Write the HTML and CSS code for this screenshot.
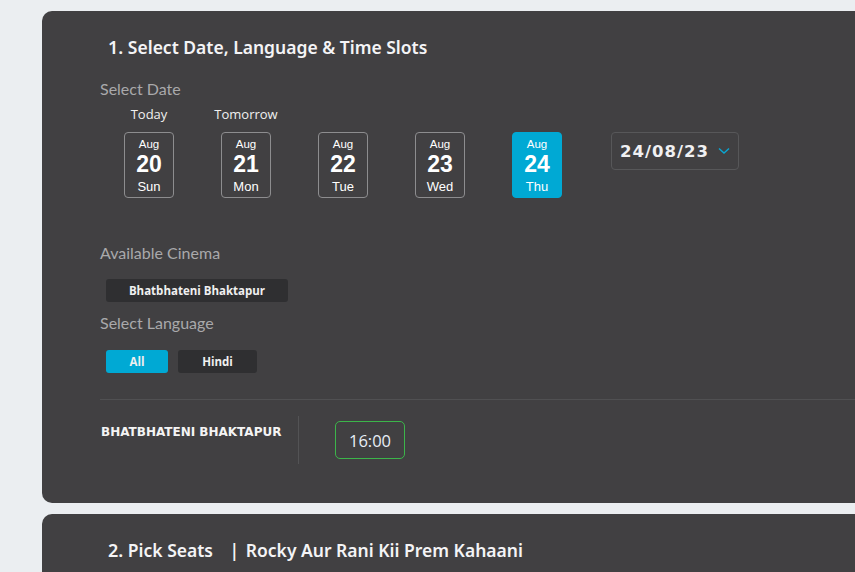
FILE: index.html
```html
<!DOCTYPE html>
<html>
<head>
<meta charset="utf-8">
<link rel="stylesheet" href="styles.css">
</head>
<body>
<main class="page">
  <section class="card card-one">
    <h2 class="step-title"><span class="num">1.</span> Select Date, Language &amp; Time Slots</h2>
    <div class="section-label">Select Date</div>
    <div class="date-row">
      <div class="date-col">
        <div class="date-cap">Today</div>
        <div class="date-box"><span class="m">Aug</span><span class="d">20</span><span class="w">Sun</span></div>
      </div>
      <div class="date-col">
        <div class="date-cap">Tomorrow</div>
        <div class="date-box"><span class="m">Aug</span><span class="d">21</span><span class="w">Mon</span></div>
      </div>
      <div class="date-col">
        <div class="date-cap"></div>
        <div class="date-box"><span class="m">Aug</span><span class="d">22</span><span class="w">Tue</span></div>
      </div>
      <div class="date-col">
        <div class="date-cap"></div>
        <div class="date-box"><span class="m">Aug</span><span class="d">23</span><span class="w">Wed</span></div>
      </div>
      <div class="date-col">
        <div class="date-cap"></div>
        <div class="date-box active"><span class="m">Aug</span><span class="d">24</span><span class="w">Thu</span></div>
      </div>
      <div class="date-col">
        <div class="date-cap"></div>
        <div class="date-picker">24/08/23
          <svg class="chev" width="12" height="8" viewBox="0 0 12 8"><path d="M1 1.5 L6 6 L11 1.5" fill="none" stroke="#0aa6d2" stroke-width="1.4"/></svg>
        </div>
      </div>
    </div>

    <div class="section-label cinema-label">Available Cinema</div>
    <div class="chip-row cinema-chips">
      <span class="chip">Bhatbhateni Bhaktapur</span>
    </div>
    <div class="section-label lang-label">Select Language</div>
    <div class="chip-row lang-chips">
      <span class="chip chip-lang active">All</span>
      <span class="chip chip-lang hindi">Hindi</span>
    </div>

    <div class="show-row">
      <div class="cinema-name">BHATBHATENI BHAKTAPUR</div>
      <div class="times">
        <span class="time">16:00</span>
      </div>
    </div>
  </section>

  <section class="card card-two">
    <h2 class="step-title"><span class="num">2.</span> Pick Seats <span class="bar">|</span> Rocky Aur Rani Kii Prem Kahaani</h2>
  </section>
</main>
</body>
</html>
```

FILE: styles.css
```css
* { box-sizing: border-box; }
html, body { margin: 0; padding: 0; }
body {
  background: #ebeef1;
  font-family: "Open Sans", "Noto Sans", sans-serif;
  color: #fff;
  overflow: hidden;
  width: 855px;
  height: 572px;
}
.page {
  padding: 11px 0 0 42px;
  display: flex;
  flex-direction: column;
  gap: 11px;
}
.card {
  background: #414042;
  border-radius: 10px 0 0 10px;
  width: 813px;
}
.card-one {
  height: 492px;
  padding: 24px 0 0 58px;
}
.card-two {
  height: 80px;
  padding: 24px 0 0 66px;
}
.step-title {
  margin: 0 0 0 8px;
  font-family: "Noto Sans", sans-serif;
  font-size: 17.5px;
  font-weight: 600;
  line-height: 24px;
  color: #f4f4f6;
}
.card-two .step-title { margin-left: 0; }
.step-title .num { font-size: 18px; }
.step-title .bar { margin-left: 12px; margin-right: 2px; }
.section-label {
  font-family: "Lato", sans-serif;
  font-size: 16px;
  color: #a9a9ab;
  line-height: 20px;
  margin-top: 20px;
}
.date-row {
  display: flex;
  gap: 47px;
  margin-top: 6px;
  padding-left: 24px;
}
.date-col {
  display: flex;
  flex-direction: column;
  align-items: center;
  width: 50px;
}
.date-cap {
  height: 18px;
  font-size: 13px;
  line-height: 18px;
  white-space: nowrap;
  color: #f0f0f0;
  margin-bottom: 9px;
}
.date-box {
  width: 50px;
  height: 66px;
  border: 1px solid #8d8d8f;
  border-radius: 4px;
  display: flex;
  flex-direction: column;
  align-items: center;
  padding-top: 5px;
  font-family: "Liberation Sans", Arial, sans-serif;
}
.date-box.active {
  background: #00a9d4;
  border-color: #00a9d4;
}
.date-box .m { font-size: 11.5px; line-height: 12px; }
.date-box .d { font-size: 23px; font-weight: 700; line-height: 29px; }
.date-box .w { font-size: 13px; line-height: 15px; }
.date-col:last-child { width: auto; align-items: flex-start; margin-left: 2px; }
.date-picker {
  width: 128px;
  height: 38px;
  border: 1px solid #575759;
  border-radius: 4px;
  display: flex;
  align-items: center;
  padding-left: 8px;
  font-family: "DejaVu Sans", sans-serif;
  font-weight: 700;
  font-size: 16.5px;
  letter-spacing: 1px;
  color: #f0f0f2;
}
.chev { margin-left: 9px; }
.cinema-label { margin-top: 45px; }
.lang-label { margin-top: 11px; }
.chip-row {
  display: flex;
  gap: 10px;
  padding-left: 6px;
}
.cinema-chips { margin-top: 16px; }
.lang-chips { margin-top: 17px; }
.chip {
  display: inline-flex;
  align-items: center;
  justify-content: center;
  height: 23px;
  width: 182px;
  border-radius: 3px;
  background: #2f2f31;
  font-size: 11.5px;
  font-weight: 700;
  color: #f0f0f0;
}
.chip-lang { width: 62px; }
.chip-lang.hindi { width: 79px; }
.chip-lang.active { background: #00a9d4; }
.show-row {
  margin-top: 26px;
  border-top: 1px solid #505052;
  display: flex;
  padding-top: 16px;
}
.cinema-name {
  width: 199px;
  height: 48px;
  border-right: 1px solid #535355;
  padding-left: 1px;
  padding-top: 9px;
  font-family: "DejaVu Sans", sans-serif;
  font-weight: 700;
  font-size: 12px;
  line-height: 14px;
  color: #f4f4f4;
  white-space: nowrap;
}
.times { padding-left: 36px; padding-top: 5px; }
.time {
  display: inline-flex;
  align-items: center;
  justify-content: center;
  width: 70px;
  height: 38px;
  border: 1px solid #3cb54a;
  border-radius: 5px;
  font-size: 16.5px;
  font-weight: 500;
  color: #e8eef6;
}
```
